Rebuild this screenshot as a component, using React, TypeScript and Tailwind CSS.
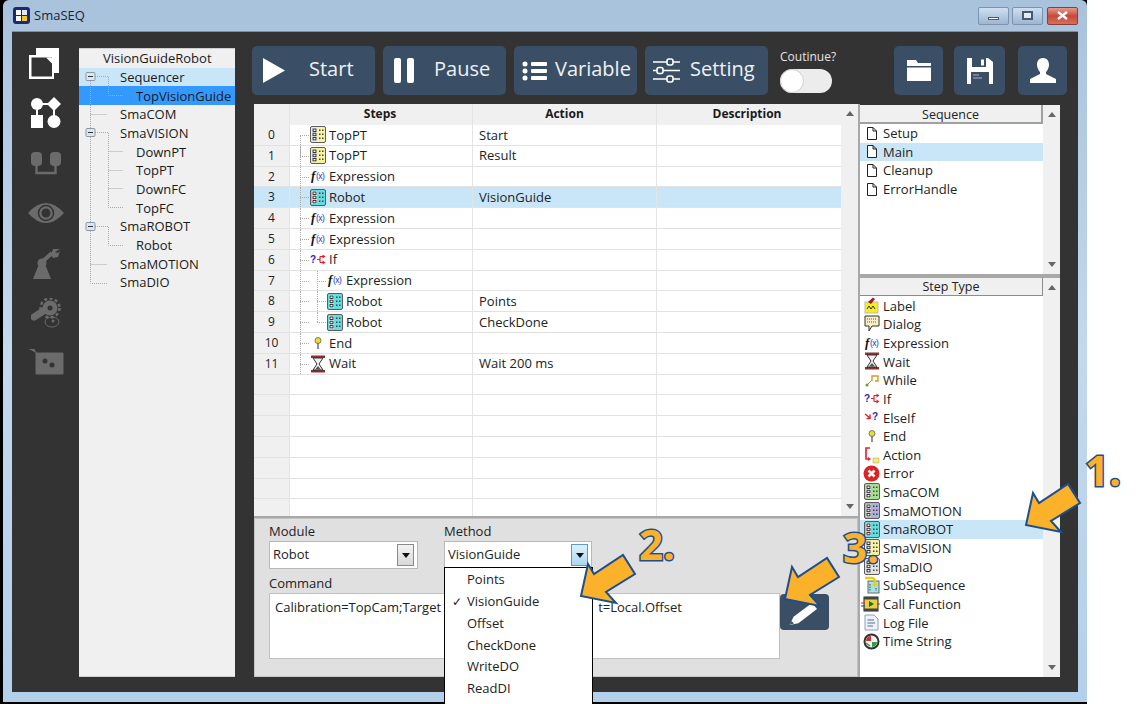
import React from "react";

const font = { fontFamily: '"Open Sans", "Noto Sans", sans-serif' };

function Mod({ c, s = 16 }: { c: string; s?: number }) {
  return (
    <svg width={s} height={s + 1} viewBox="0 0 16 17" className="shrink-0">
      <rect x="0.5" y="0.5" width="15" height="16" rx="1.5" fill={c} stroke="#5c5c5c" />
      <rect x="2" y="2" width="5" height="13" fill="#f4f4f4" />
      <rect x="3" y="3" width="3" height="2.5" fill="none" stroke="#222" strokeWidth="0.9" />
      <rect x="3" y="7.2" width="3" height="2.5" fill="none" stroke="#222" strokeWidth="0.9" />
      <rect x="3" y="11.4" width="3" height="2.5" fill="none" stroke="#222" strokeWidth="0.9" />
      <g fill="#444">
        <rect x="9" y="3.5" width="1.5" height="1.5" /><rect x="12" y="3.5" width="1.5" height="1.5" />
        <rect x="9" y="7.5" width="1.5" height="1.5" /><rect x="12" y="7.5" width="1.5" height="1.5" />
        <rect x="9" y="11.5" width="1.5" height="1.5" /><rect x="12" y="11.5" width="1.5" height="1.5" />
      </g>
    </svg>
  );
}

function Fx() {
  return (
    <svg width="16" height="16" viewBox="0 0 16 16" className="shrink-0">
      <text x="1" y="11.5" fontFamily="Liberation Serif" fontStyle="italic" fontWeight="700" fontSize="13" fill="#111">f</text>
      <text x="6" y="10.5" fontFamily="Liberation Sans" fontSize="8.5" letterSpacing="-0.6" fill="#2233bb">(x)</text>
    </svg>
  );
}
function Wait() {
  return (
    <svg width="16" height="18" viewBox="0 0 16 18" className="shrink-0">
      <rect x="1" y="0.5" width="14" height="2.5" fill="#8a3030" />
      <rect x="1" y="15" width="14" height="2.5" fill="#8a3030" />
      <path d="M3 3 L13 3 L9 9 L13 15 L3 15 L7 9 Z" fill="#f2f2f2" stroke="#333" />
      <path d="M5 14.5 L11 14.5 L8 11 Z" fill="#555" />
    </svg>
  );
}
function If() {
  return (
    <svg width="16" height="12" viewBox="0 0 16 12" className="shrink-0">
      <text x="0" y="9" fontFamily="Liberation Sans" fontWeight="700" fontSize="10" fill="#2a2ac0">?</text>
      <path d="M7 5.5 H10 M10 2.5 V8.5 M10 2.5 H13 M10 8.5 H13" fill="none" stroke="#e02030" strokeWidth="1.2" />
      <path d="M12.5 0.5 L15.5 2.5 L12.5 4.5 Z M12.5 6.5 L15.5 8.5 L12.5 10.5 Z" fill="#e02030" />
    </svg>
  );
}
function ElseIf() {
  return (
    <svg width="16" height="12" viewBox="0 0 16 12" className="shrink-0">
      <path d="M1 3 L6 7 M6 3.5 V7.5 H2.5" fill="none" stroke="#e02030" strokeWidth="1.4" />
      <text x="8" y="9" fontFamily="Liberation Sans" fontWeight="700" fontSize="10" fill="#2a2ac0">?</text>
    </svg>
  );
}
function End() {
  return (
    <svg width="16" height="14" viewBox="0 0 16 14" className="shrink-0">
      <circle cx="8" cy="4.5" r="3" fill="#e8e020" stroke="#777" />
      <path d="M8 7.5 V13" stroke="#555" strokeWidth="1.3" />
    </svg>
  );
}
function Doc() {
  return (
    <svg width="10" height="13" viewBox="0 0 10 13" className="shrink-0">
      <path d="M0.5 0.5 H6 L9.5 4 V12.5 H0.5 Z M6 0.5 V4 H9.5" fill="#fff" stroke="#222" />
    </svg>
  );
}
const LabelI = () => (
  <svg width="17" height="17" viewBox="0 0 17 17" className="shrink-0">
    <rect x="2" y="5" width="13" height="11" fill="#f4ee20" stroke="#bbb" />
    <path d="M4 12 L6 9 L8 12 L10 9 L12 12" fill="none" stroke="#333" />
    <path d="M5 5 L10 0.5 L12 2 L8 7 Z" fill="#a81830" />
  </svg>
);
const DialogI = () => (
  <svg width="16" height="17" viewBox="0 0 16 17" className="shrink-0">
    <path d="M1 1 H15 V11 H8 L5 16 V11 H1 Z" fill="#f6efc8" stroke="#333" />
    <path d="M3 4 H13 M3 7 H13" stroke="#555" strokeDasharray="1 1" />
  </svg>
);
const WhileI = () => (
  <svg width="16" height="14" viewBox="0 0 16 14" className="shrink-0">
    <circle cx="3" cy="12" r="1.5" fill="#6a9a30" />
    <path d="M4 11 L8 7" stroke="#888" />
    <path d="M8 8 V3 H14 V8 H11" fill="none" stroke="#d89a20" strokeWidth="1.4" />
  </svg>
);
const ActionI = () => (
  <svg width="16" height="18" viewBox="0 0 16 18" className="shrink-0">
    <path d="M6 2 H2 V13 H5" fill="none" stroke="#e02030" strokeWidth="1.6" />
    <path d="M4 11 L7 13 L4 15 Z" fill="#e02030" />
    <rect x="9" y="12" width="6" height="5" fill="#f4ee60" stroke="#999" strokeWidth="0.5" />
  </svg>
);
const ErrorI = () => (
  <svg width="17" height="17" viewBox="0 0 17 17" className="shrink-0">
    <circle cx="8.5" cy="8.5" r="8" fill="#dd2222" />
    <path d="M5.5 5.5 L11.5 11.5 M11.5 5.5 L5.5 11.5" stroke="#fff" strokeWidth="2.6" />
  </svg>
);
const SubI = () => (
  <svg width="16" height="18" viewBox="0 0 16 18" className="shrink-0">
    <rect x="4" y="5" width="11" height="12" fill="#9fe4e8" stroke="#666" />
    <path d="M1 2 H8 Q11 2 11 6 V9" fill="none" stroke="#e8d010" strokeWidth="2.4" />
    <path d="M8 8 H14 L11 11 Z" fill="#e8d010" />
    <path d="M6 8 V15 M12 12 V15" stroke="#444" strokeDasharray="1.5 1" />
  </svg>
);
const CallI = () => (
  <svg width="19" height="16" viewBox="0 0 19 16" className="shrink-0 -ml-[2px]">
    <rect x="3" y="1" width="14" height="14" fill="#e8d040" stroke="#222" />
    <rect x="3" y="1" width="14" height="2.5" fill="#444" />
    <rect x="3" y="12.5" width="14" height="2.5" fill="#444" />
    <path d="M8 5 L13 8 L8 11 Z" fill="#1a6a20" />
    <path d="M0 7 H4" stroke="#e02030" /><path d="M0 10 H4" stroke="#2233bb" /><path d="M16 8 H19" stroke="#e02030" />
  </svg>
);
const LogI = () => (
  <svg width="15" height="17" viewBox="0 0 15 17" className="shrink-0">
    <path d="M1 1 H10 L14 5 V16 H1 Z" fill="#eef3fb" stroke="#8aa0c8" />
    <path d="M3.5 6 H10 M3.5 9 H11 M3.5 12 H9" stroke="#5a6a90" />
  </svg>
);
const TimeI = () => (
  <svg width="17" height="17" viewBox="0 0 17 17" className="shrink-0">
    <circle cx="8.5" cy="8.5" r="7" fill="#f4f4f4" stroke="#333" strokeWidth="2" />
    <path d="M3 8 A5 5 0 0 1 8 3 V8 Z" fill="#d03030" />
    <path d="M9 14 A5 5 0 0 0 14 9 H9 Z" fill="#30a040" />
    <path d="M3 10 L7 13" stroke="#30a040" strokeWidth="1.5" />
  </svg>
);

const Y = "#f7f3a0", T = "#63dde0", G = "#a5e090", P = "#b0b0e0", W = "#e4e4e4";

type Row = { n: string; lv: number; icon: React.ReactNode; step: string; act?: string; sel?: boolean };
const rows: Row[] = [
  { n: "0", lv: 0, icon: <Mod c={Y} />, step: "TopPT", act: "Start" },
  { n: "1", lv: 0, icon: <Mod c={Y} />, step: "TopPT", act: "Result" },
  { n: "2", lv: 0, icon: <Fx />, step: "Expression" },
  { n: "3", lv: 0, icon: <Mod c={T} />, step: "Robot", act: "VisionGuide", sel: true },
  { n: "4", lv: 0, icon: <Fx />, step: "Expression" },
  { n: "5", lv: 0, icon: <Fx />, step: "Expression" },
  { n: "6", lv: 0, icon: <If />, step: "If" },
  { n: "7", lv: 1, icon: <Fx />, step: "Expression" },
  { n: "8", lv: 1, icon: <Mod c={T} />, step: "Robot", act: "Points" },
  { n: "9", lv: 1, icon: <Mod c={T} />, step: "Robot", act: "CheckDone" },
  { n: "10", lv: 0, icon: <End />, step: "End" },
  { n: "11", lv: 0, icon: <Wait />, step: "Wait", act: "Wait 200 ms" },
  ...Array.from({ length: 7 }, () => ({ n: "", lv: 0, icon: null, step: "" })),
];

const tree: { t: string; x: number; cls?: string }[] = [
  { t: "VisionGuideRobot", x: 24 },
  { t: "Sequencer", x: 41, cls: "bg-[#c9e6f8]" },
  { t: "TopVisionGuide", x: 57, cls: "bg-[#3399ff]" },
  { t: "SmaCOM", x: 41 },
  { t: "SmaVISION", x: 41 },
  { t: "DownPT", x: 57 },
  { t: "TopPT", x: 57 },
  { t: "DownFC", x: 57 },
  { t: "TopFC", x: 57 },
  { t: "SmaROBOT", x: 41 },
  { t: "Robot", x: 57 },
  { t: "SmaMOTION", x: 41 },
  { t: "SmaDIO", x: 41 },
];

const stepTypes: { i: React.ReactNode; t: string; sel?: boolean }[] = [
  { i: <LabelI />, t: "Label" },
  { i: <DialogI />, t: "Dialog" },
  { i: <Fx />, t: "Expression" },
  { i: <Wait />, t: "Wait" },
  { i: <WhileI />, t: "While" },
  { i: <If />, t: "If" },
  { i: <ElseIf />, t: "ElseIf" },
  { i: <End />, t: "End" },
  { i: <ActionI />, t: "Action" },
  { i: <ErrorI />, t: "Error" },
  { i: <Mod c={G} />, t: "SmaCOM" },
  { i: <Mod c={P} />, t: "SmaMOTION" },
  { i: <Mod c={T} />, t: "SmaROBOT", sel: true },
  { i: <Mod c={Y} />, t: "SmaVISION" },
  { i: <Mod c={W} />, t: "SmaDIO" },
  { i: <SubI />, t: "SubSequence" },
  { i: <CallI />, t: "Call Function" },
  { i: <LogI />, t: "Log File" },
  { i: <TimeI />, t: "Time String" },
];

function Scroll({ cls = "" }: { cls?: string }) {
  return (
    <div className={`w-[17px] shrink-0 bg-[#f0f0f0] flex flex-col justify-between items-center py-[7px] ${cls}`}>
      <svg width="8" height="5" viewBox="0 0 8 5"><path d="M4 0 L8 5 H0 Z" fill="#666" /></svg>
      <svg width="8" height="5" viewBox="0 0 8 5"><path d="M4 5 L8 0 H0 Z" fill="#666" /></svg>
    </div>
  );
}

function Btn({ w, icon, label, gap }: { w: string; icon: React.ReactNode; label?: string; gap?: string }) {
  return (
    <button className={`${w} h-[49px] shrink-0 rounded-[5px] bg-[#3a4f66] flex items-center text-white ${gap ?? ""}`}>
      {icon}
      {label && <span className="text-[20px] leading-none pb-[3px] text-[#eef1f4]">{label}</span>}
    </button>
  );
}

function Combo({ w, v, open }: { w: string; v: string; open?: boolean }) {
  return (
    <div className={`${w} h-[28px] bg-white border border-[#b8b8b8] flex items-center justify-between pl-[3px] pr-[3px]`}>
      <span className="text-[13px] text-[#222]">{v}</span>
      <span className={`w-[17px] h-[22px] border flex items-center justify-center ${open ? "border-[#5a9ad0] bg-gradient-to-b from-[#dff1fb] to-[#a9d8f2]" : "border-[#8a8a8a] bg-gradient-to-b from-[#f4f4f4] to-[#d8d8d8]"}`}>
        <svg width="8" height="5" viewBox="0 0 8 5"><path d="M0 0 H8 L4 5 Z" fill="#111" /></svg>
      </span>
    </div>
  );
}

function Arrow({ cls, pts }: { cls: string; pts: string }) {
  return (
    <svg width="70" height="62" viewBox="0 0 70 62" className={`absolute ${cls}`}>
      <polygon points={pts} fill="#fbb22a" stroke="#1d4f90" strokeWidth="2" strokeLinejoin="miter" />
    </svg>
  );
}

const numCls = "absolute font-bold text-[42px] leading-none text-[#fbb22a] [-webkit-text-stroke:3px_#1d4f90] [paint-order:stroke_fill]";
const arrowPts = "3,45 10,13 16,23 45,4 57,23 28,41 38,52";

export default function App() {
  return (
    <div style={font} className="relative w-[1141px] h-[704px] bg-white overflow-hidden">
      <div className="w-[1087px] h-[704px] bg-black pl-[3px] pb-[2px]">
        <div className="h-[702px] flex flex-col bg-gradient-to-b from-[#a9c2dc] via-[#c4d8ee] to-[#b3d0ea] rounded-t-[6px]">
          {/* title bar */}
          <div className="h-[31px] shrink-0 flex items-center pl-[10px] pr-[9px]">
            <svg width="17" height="17" viewBox="0 0 17 17" className="shrink-0">
              <rect width="17" height="17" rx="3" fill="#1b2a70" />
              <rect x="3" y="3" width="5" height="5" fill="#fff" /><rect x="9" y="3" width="5" height="5" fill="#dfe6f5" />
              <rect x="3" y="9" width="5" height="5" fill="#fff" /><rect x="9" y="9" width="5" height="5" fill="#f2c92a" />
            </svg>
            <span className="ml-[4px] text-[13px] text-[#1b2430]">SmaSEQ</span>
            <div className="ml-auto flex gap-[3px] items-center">
              <div className="w-[31px] h-[18px] rounded-[2px] border border-[#7e93ad] bg-gradient-to-b from-[#cfdff0] to-[#9db6d2] flex items-center justify-center">
                <div className="w-[11px] h-[3px] bg-white border border-[#4a5a6e] mt-[5px]" />
              </div>
              <div className="w-[31px] h-[18px] rounded-[2px] border border-[#7e93ad] bg-gradient-to-b from-[#cfdff0] to-[#9db6d2] flex items-center justify-center">
                <div className="w-[11px] h-[9px] border-2 border-[#4a5a6e] bg-white/60" />
              </div>
              <div className="w-[31px] h-[18px] ml-[1px] rounded-[2px] border border-[#8a4038] bg-gradient-to-b from-[#e29a8c] via-[#c9483a] to-[#d0705f] flex items-center justify-center">
                <svg width="11" height="9" viewBox="0 0 11 9"><path d="M1 1 L10 8 M10 1 L1 8" stroke="#fff" strokeWidth="2.4" /></svg>
              </div>
            </div>
          </div>

          {/* client */}
          <div className="ml-[9px] w-[1066px] h-[661px] bg-[#333333] border-t border-[#8c8c8c] flex shrink-0">
            {/* rail */}
            <div className="w-[67px] shrink-0 relative">
              <div className="flex flex-col items-center pt-[16px] w-full">
                <svg width="31" height="32" viewBox="0 0 31 32" className="ml-[-2px]">
                  <path d="M7 0 H30 V25 H24 V7 H7 Z" fill="#fff" />
                  <rect x="0" y="7" width="25" height="24" fill="#fff" />
                  <rect x="2.5" y="9.5" width="20.5" height="19" fill="#333" />
                  <path d="M17 9.5 L23 15.5 V9.5 Z" fill="#fff" />
                </svg>
                <svg width="32" height="32" viewBox="0 0 32 32" className="mt-[17px]">
                  <circle cx="7" cy="7" r="6" fill="#fff" />
                  <path d="M24 0 L31 7 L24 14 L17 7 Z" fill="#fff" />
                  <path d="M7 7 H24 M7 7 V20 M24 7 V20" stroke="#fff" strokeWidth="2" />
                  <rect x="1" y="18" width="12" height="13" fill="#fff" />
                  <circle cx="24" cy="24.5" r="6.5" fill="#fff" />
                </svg>
                <svg width="32" height="24" viewBox="0 0 32 24" className="mt-[23px]">
                  <rect x="1" y="0" width="11" height="14" rx="4" fill="#6b6b6b" />
                  <rect x="20" y="0" width="11" height="14" rx="4" fill="#6b6b6b" />
                  <path d="M6.5 14 V21 H25.5 V14" fill="none" stroke="#6b6b6b" strokeWidth="2.4" />
                </svg>
                <svg width="36" height="24" viewBox="0 0 36 24" className="mt-[25px]">
                  <path d="M0 12 Q18 -8 36 12 Q18 32 0 12 Z" fill="#6b6b6b" />
                  <circle cx="18" cy="12" r="7.5" fill="none" stroke="#333" strokeWidth="1.6" />
                  <circle cx="18" cy="12" r="4.5" fill="#333" />
                </svg>
                <svg width="30" height="32" viewBox="0 0 30 32" className="mt-[23px]">
                  <path d="M2 31 L8 16 H14 L20 31 Z" fill="#6b6b6b" />
                  <circle cx="11" cy="15" r="4.5" fill="#6b6b6b" />
                  <path d="M11 14 L21 5" stroke="#6b6b6b" strokeWidth="4" />
                  <path d="M20 7 L22 1 L29 1 L24 4 L27 5 L29 3 L27 9 L22 10 Z" fill="#6b6b6b" />
                </svg>
                <svg width="30" height="32" viewBox="0 0 30 32" className="mt-[18px]">
                  <circle cx="19" cy="10" r="7.5" fill="#6b6b6b" />
                  <circle cx="19" cy="10" r="9.5" fill="none" stroke="#6b6b6b" strokeWidth="2.5" strokeDasharray="3 2.5" />
                  <path d="M3 19 L14 12" stroke="#6b6b6b" strokeWidth="7" strokeLinecap="round" />
                  <circle cx="19" cy="10" r="2.5" fill="#333" />
                  <ellipse cx="21" cy="24" rx="7" ry="5" fill="none" stroke="#6b6b6b" />
                  <circle cx="22" cy="23" r="1.5" fill="#6b6b6b" />
                </svg>
                <svg width="36" height="26" viewBox="0 0 36 26" className="mt-[19px]">
                  <path d="M1 0 H6 L8 4 H35 V25 H8 V4" fill="#6b6b6b" stroke="#6b6b6b" />
                  <circle cx="17" cy="12" r="2.5" fill="#333" />
                  <circle cx="24" cy="16" r="2.5" fill="#333" />
                </svg>
              </div>
            </div>

            {/* tree */}
            <div className="relative w-[156px] h-[629px] mt-[16px] shrink-0 bg-[#f0f0f0] border-y border-[#cfcfcf] overflow-hidden">
              {tree.map((r, i) => (
                <div key={i} style={{ paddingLeft: r.x }} className={`h-[18.67px] flex items-center pt-[1px] text-[13px] leading-none text-[#1a1a1a] ${r.cls ?? ""}`}>
                  {r.t}
                </div>
              ))}
              <svg width="70" height="270" viewBox="0 0 70 270" className="absolute left-0 top-0">
                <g stroke="#aaa" strokeDasharray="1 1" fill="none">
                  <path d="M11.5 28 V234.5 H28 M11.5 65.5 H28 M11.5 215.5 H28 M16 27.5 H29.5 V46.5 H44 M16 83.5 H29.5 V158.5 H44 M29.5 102.5 H44 M29.5 121.5 H44 M29.5 139.5 H44 M16 177.5 H29.5 V196.5 H44" />
                </g>
                {[27.5, 83.5, 177.5].map((y) => (
                  <g key={y}>
                    <rect x="7" y={y - 4} width="9" height="8" rx="1" fill="#dce6ee" stroke="#8a98a8" />
                    <path d={`M9 ${y} H14`} stroke="#333" />
                  </g>
                ))}
              </svg>
            </div>

            {/* main */}
            <div className="w-[843px] pl-[17px] pt-[14px] shrink-0">
              <div className="flex items-start h-[49px]">
                <Btn w="w-[123px]" gap="pl-[11px] gap-[24px]" label="Start" icon={<svg width="22" height="25" viewBox="0 0 22 25" className="shrink-0"><path d="M0 0 L22 12.5 L0 25 Z" fill="#fff" /></svg>} />
                <Btn w="w-[123px] ml-[8px]" gap="pl-[11px] gap-[20px]" label="Pause" icon={<svg width="20" height="25" viewBox="0 0 20 25" className="shrink-0"><rect width="7" height="25" rx="2" fill="#fff" /><rect x="13" width="7" height="25" rx="2" fill="#fff" /></svg>} />
                <Btn w="w-[123px] ml-[8px]" gap="pl-[8px] gap-[8px]" label="Variable" icon={<svg width="25" height="20" viewBox="0 0 25 20" className="shrink-0"><g fill="#fff"><circle cx="3" cy="3" r="2.5" /><circle cx="3" cy="10" r="2.5" /><circle cx="3" cy="17" r="2.5" /><rect x="9" y="1" width="16" height="4" rx="1" /><rect x="9" y="8" width="16" height="4" rx="1" /><rect x="9" y="15" width="16" height="4" rx="1" /></g></svg>} />
                <Btn w="w-[123px] ml-[8px]" gap="pl-[8px] gap-[10px]" label="Setting" icon={<svg width="27" height="25" viewBox="0 0 27 25" className="shrink-0"><g fill="none" stroke="#fff" strokeWidth="1.6"><path d="M0 4 H14 M20 4 H27 M0 12.5 H4 M10 12.5 H27 M0 21 H14 M20 21 H27" /><rect x="14" y="1" width="6" height="6" rx="2" /><rect x="4" y="9.5" width="6" height="6" rx="2" /><rect x="14" y="18" width="6" height="6" rx="2" /></g></svg>} />
                <div className="ml-[12px] w-[60px] shrink-0">
                  <div className="text-[12px] leading-[16px] text-[#e4e4e4] mt-[3px]">Coutinue?</div>
                  <div className="mt-[4px] w-[52px] h-[24px] rounded-full bg-[#ececec] flex items-center">
                    <div className="w-[24px] h-[24px] rounded-full bg-white border border-[#cfcfcf]" />
                  </div>
                </div>
                <Btn w="w-[49px] ml-[54px] justify-center" icon={<svg width="26" height="23" viewBox="0 0 26 23"><path d="M1 1 H10 L12 4 H25 V7 H1 Z M1 8.5 H25 V22 H1 Z" fill="#fff" /></svg>} />
                <Btn w="w-[51px] ml-[11px] justify-center" icon={<svg width="26" height="26" viewBox="0 0 26 26"><path d="M0 0 H21 L26 4 V26 H0 Z" fill="#fff" /><rect x="5" y="0" width="14" height="9" fill="#3a4f66" /><rect x="14" y="1.5" width="3" height="6" fill="#fff" /><rect x="4" y="14" width="18" height="12" fill="#3a4f66" /><path d="M6 17 H12 M6 20 H15" stroke="#aab4c0" /></svg>} />
                <Btn w="w-[49px] ml-[13px] justify-center" icon={<svg width="26" height="25" viewBox="0 0 26 25"><path d="M13 0 C18 0 19 4 19 7 C19 10 17 13 16 14 V16 L26 21 V25 H0 V21 L10 16 V14 C9 13 7 10 7 7 C7 4 8 0 13 0 Z" fill="#fff" /></svg>} />
              </div>

              <div className="flex mt-[9px] ml-[2px]">
                {/* center */}
                <div className="w-[606px] shrink-0 bg-[#a8a8a8] border-r-2 border-[#a8a8a8]">
                  <div className="h-[412px] bg-white flex overflow-hidden">
                    <div className="w-[587px] shrink-0">
                      <div className="h-[21px] flex bg-[#f0f0f0] text-[12px] font-bold text-[#1a1a1a] leading-[19px]">
                        <div className="w-[36px] shrink-0 border-r border-[#e4e4e4]" />
                        <div className="w-[183px] shrink-0 text-center pr-[2px] border-r border-[#e4e4e4]">Steps</div>
                        <div className="w-[184px] shrink-0 text-center border-r border-[#e4e4e4]">Action</div>
                        <div className="flex-1 text-center pr-[4px]">Description</div>
                      </div>
                      {rows.map((r, i) => (
                        <div key={i} className={`h-[20.8px] flex border-b border-[#e2e2e2] text-[13px] text-[#222] ${r.sel ? "bg-[#c9e6f8]" : ""}`}>
                          <div className={`w-[36px] shrink-0 text-center text-[12px] leading-[19px] border-r border-[#e4e4e4] ${r.sel ? "" : "bg-[#f0f0f0]"}`}>{r.n}</div>
                          <div className="relative w-[183px] shrink-0 border-r border-[#e4e4e4] flex items-center">
                            {r.n && (
                              <>
                                <div className={`absolute left-[10px] top-0 h-full border-l border-dotted border-[#aaa] ${r.n === "0" ? "top-[10px] h-[10px]" : ""} ${r.n === "11" ? "h-[10px]" : ""}`} />
                                <div className={`absolute left-[10px] top-[10px] w-[9px] border-t border-dotted border-[#aaa]`} />
                                {r.lv === 1 && (
                                  <>
                                    <div className={`absolute left-[27px] top-0 border-l border-dotted border-[#aaa] ${r.n === "9" ? "h-[10px]" : "h-full"}`} />
                                    <div className="absolute left-[27px] top-[10px] w-[9px] border-t border-dotted border-[#aaa]" />
                                  </>
                                )}
                              </>
                            )}
                            <div style={{ marginLeft: r.lv ? 37 : 20 }} className="relative w-[16px] flex justify-center shrink-0">{r.icon}</div>
                            <span className="ml-[3px] pt-[1px]">{r.step}</span>
                          </div>
                          <div className="w-[184px] shrink-0 pl-[6px] pt-[1px] border-r border-[#e4e4e4] flex items-center">{r.act}</div>
                          <div className="flex-1" />
                        </div>
                      ))}
                    </div>
                    <Scroll />
                  </div>
                  <div className="mt-[2px] h-[159px] bg-[#e0e0e0] border border-[#c4c4c4] pl-[14px] pt-[2px]">
                    <div className="flex gap-[26px]">
                      <div>
                        <div className="text-[13px] leading-[20px] text-[#222]">Module</div>
                        <Combo w="w-[149px]" v="Robot" />
                      </div>
                      <div>
                        <div className="text-[13px] leading-[20px] text-[#222]">Method</div>
                        <Combo w="w-[148px]" v="VisionGuide" open />
                      </div>
                    </div>
                    <div className="text-[13px] leading-[19px] mt-[5px] text-[#222]">Command</div>
                    <div className="flex items-start">
                      <div className="w-[511px] h-[66px] bg-white border border-[#c0c0c0] pl-[5px] pt-[4px] text-[13px] leading-[18px] text-[#222] whitespace-nowrap flex justify-between pr-[97px]">
                        <span>Calibration=TopCam;Target</span>
                        <span>t=Local.Offset</span>
                      </div>
                      <button className="w-[49px] h-[36px] mt-[1px] rounded-[4px] bg-[#3a4f66] flex items-center justify-center">
                        <svg width="32" height="32" viewBox="0 0 32 32"><path d="M0.5 29 L4.6 20.8 L23 7 L28 13 L9.4 27.2 Z" fill="#fff" /><path d="M0.5 29 L2.5 25 L5 27.5 Z" fill="#3a4f66" /></svg>
                      </button>
                    </div>
                  </div>
                </div>

                {/* right */}
                <div className="w-[200px] pt-[1px] shrink-0">
                  <div className="h-[572px] bg-[#a8a8a8] flex flex-col">
                    <div className="h-[169px] bg-white flex overflow-hidden shrink-0">
                      <div className="flex-1 min-w-0">
                        <div className="h-[19px] bg-[#f0f0f0] border-b-2 border-r-2 border-[#a0a0a0] text-center text-[12.5px] leading-[19px] text-[#222]">Sequence</div>
                        {["Setup", "Main", "Cleanup", "ErrorHandle"].map((t) => (
                          <div key={t} className={`h-[18.67px] flex items-center pl-[7px] gap-[6px] text-[13px] text-[#222] ${t === "Main" ? "bg-[#c9e6f8]" : ""}`}>
                            <Doc /><span className="pt-[1px]">{t}</span>
                          </div>
                        ))}
                      </div>
                      <Scroll />
                    </div>
                    <div className="mt-[4px] h-[399px] bg-white flex overflow-hidden shrink-0">
                      <div className="flex-1 min-w-0">
                        <div className="h-[18px] bg-[#f0f0f0] border-b border-r border-[#8c8c8c] text-center text-[12.5px] leading-[18px] text-[#222]">Step Type</div>
                        {stepTypes.map((s) => (
                          <div key={s.t} className={`h-[18.67px] flex items-center pl-[3px] text-[13px] text-[#222] ${s.sel ? "bg-[#c9e6f8]" : ""}`}>
                            <div className="w-[17px] flex justify-center shrink-0">{s.i}</div>
                            <span className="ml-[3px] pt-[2px]">{s.t}</span>
                          </div>
                        ))}
                      </div>
                      <Scroll />
                    </div>
                  </div>
                </div>
              </div>
            </div>
          </div>
        </div>
      </div>

      {/* dropdown menu */}
      <div className="absolute left-[444px] top-[567px] w-[149px] h-[140px] bg-white border border-black pt-[1px] text-[13px] text-[#222]">
        {["Points", "VisionGuide", "Offset", "CheckDone", "WriteDO", "ReadDI"].map((t) => (
          <div key={t} className="relative h-[21.8px] flex items-center pl-[22px]">
            {t === "VisionGuide" && <span className="absolute left-[7px] text-[12px]">✓</span>}
            {t}
          </div>
        ))}
      </div>

      {/* annotations */}
      <Arrow cls="left-[1023px] top-[480px]" pts={arrowPts} />
      <Arrow cls="left-[578px] top-[551px]" pts={arrowPts} />
      <Arrow cls="left-[782px] top-[554px]" pts={arrowPts} />
      <div className={`${numCls} left-[1085px] top-[449px]`}>1.</div>
      <div className={`${numCls} left-[639px] top-[523px]`}>2.</div>
      <div className={`${numCls} left-[843px] top-[526px]`}>3.</div>
    </div>
  );
}
